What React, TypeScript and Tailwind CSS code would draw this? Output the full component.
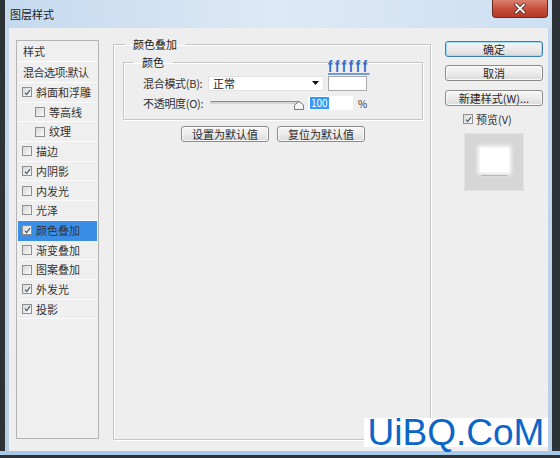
import React from "react";

const FONT = "font-['Noto_Sans_CJK_SC','Liberation_Sans',sans-serif]";

type CheckProps = { checked: boolean };

const Check: React.FC<CheckProps> = ({ checked }) => (
  <span className="flex h-[10px] w-[10px] shrink-0 items-center justify-center border border-[#8e8f8f] bg-linear-to-br from-[#d8d8d8] to-[#fafafa]">
    {checked && (
      <svg width="7" height="7" viewBox="0 0 7 7">
        <path d="M1 3.6 L2.7 5.6 L6 1.2" stroke="#4b5866" strokeWidth="1.2" fill="none" />
      </svg>
    )}
  </span>
);

const styles = [
  { label: "斜面和浮雕", checked: true },
  { label: "等高线", checked: false, sub: true },
  { label: "纹理", checked: false, sub: true },
  { label: "描边", checked: false },
  { label: "内阴影", checked: true },
  { label: "内发光", checked: false },
  { label: "光泽", checked: false },
  { label: "颜色叠加", checked: true, active: true },
  { label: "渐变叠加", checked: false },
  { label: "图案叠加", checked: false },
  { label: "外发光", checked: true },
  { label: "投影", checked: true },
];

type BtnProps = { children: React.ReactNode; focus?: boolean; className?: string };

const Btn: React.FC<BtnProps> = ({ children, focus, className }) => (
  <div
    className={
      "flex h-[16px] items-center justify-center rounded-[3px] border bg-linear-to-b from-[#f6f6f6] via-[#ebebeb] to-[#d9d9d9] text-[11px] leading-none text-[#2a2a2a] " +
      (focus
        ? "border-[#3c7fb1] shadow-[inset_0_0_0_1px_#9fdcfb] "
        : "border-[#8a8a8a] shadow-[inset_0_0_0_1px_#fbfbfb] ") +
      (className ?? "")
    }
  >
    {children}
  </div>
);

const App: React.FC = () => {
  return (
    <div className={`relative flex h-[458px] w-[560px] flex-col overflow-hidden bg-[#2e3338] pb-[3px] pl-[5px] pr-[8px] ${FONT}`}>
      <div className="flex flex-1 flex-col bg-linear-to-b from-[#c6d9ee] to-[#b9cfe6]">
        {/* title bar */}
        <div className="relative flex h-[28px] items-center bg-linear-to-r from-[#c5d9ee] via-[#dde9f6] to-[#cddff2] pl-[5px]">
          <span className="text-[11px] text-[#1b1b1b]">图层样式</span>
          <div className="absolute right-[4px] top-0 flex h-[18px] w-[56px] items-center justify-center rounded-b-[4px] border border-t-0 border-[#6e2a20] bg-linear-to-b from-[#d9806f] via-[#c6503d] to-[#b23a27]">
            <svg width="12" height="11" viewBox="0 0 12 11">
              <path d="M2 1.5 L10 9.5 M10 1.5 L2 9.5" stroke="#4a2a25" strokeWidth="3.4" strokeLinecap="square" />
              <path d="M2 1.5 L10 9.5 M10 1.5 L2 9.5" stroke="#ffffff" strokeWidth="1.8" strokeLinecap="square" />
            </svg>
          </div>
        </div>

        {/* client */}
        <div className="mx-[4px] mb-[4px] flex flex-1 items-start bg-[#eeeeee] pl-[7px]">
          {/* style list */}
          <div className="mt-[12px] flex h-[399px] w-[83px] flex-col border border-[#b4b4b4] bg-[#efefef] p-[1px] text-[11px] text-[#333]">
            <div className="flex h-[20px] items-center border-b border-white pl-[5px]">样式</div>
            <div className="flex h-[21px] items-center border-b border-white pl-[5px] tracking-[-0.5px]">混合选项:默认</div>
            {styles.map((s) => (
              <div
                key={s.label}
                className={
                  "flex h-[19.7px] items-center gap-[4px] border-b " +
                  (s.active ? "border-[#3a8ee6] bg-[#3a8ee6] " : "border-[#fbfbfb] ") +
                  (s.sub ? "pl-[17px]" : "pl-[4px]")
                }
              >
                <Check checked={s.checked} />
                <span>{s.label}</span>
              </div>
            ))}
          </div>

          {/* colour overlay group */}
          <fieldset className="ml-[14px] mt-[8px] h-[404px] w-[318px] border border-[#c6c6c6] pl-[9px] pr-[7px] shadow-[inset_1px_1px_0_#ffffff,1px_1px_0_#ffffff]">
            <legend className="ml-[2px] px-[8px] text-[11px] leading-[16px] text-[#222]">颜色叠加</legend>
            <fieldset className="mt-[2px] h-[66px] w-[300px] border border-[#c6c6c6] pl-[19px] shadow-[inset_1px_1px_0_#ffffff,1px_1px_0_#ffffff]">
              <legend className="ml-[-10px] px-[9px] text-[11px] leading-[16px] text-[#222]">颜色</legend>
              <div className="mt-[5px] flex h-[16px] items-center text-[11px] text-[#333]">
                <span className="w-[65px] tracking-[-0.3px]">混合模式(B):</span>
                <div className="flex h-[15px] w-[116px] items-center justify-between border border-[#e2e2e2] bg-white pl-[4px] pr-[4px]">
                  <span className="text-[#222]">正常</span>
                  <svg width="7" height="4" viewBox="0 0 7 4">
                    <path d="M0 0 H7 L3.5 4 Z" fill="#111" />
                  </svg>
                </div>
                <div className="ml-[4px] h-[15px] w-[39px] border border-[#a9a9a9] bg-white" />
              </div>
              <div className="mt-[4px] flex h-[16px] items-center text-[11px] text-[#333]">
                <span className="w-[67px] tracking-[-0.3px]">不透明度(O):</span>
                <div className="relative h-[16px] w-[92px]">
                  <div className="absolute left-0 right-[2px] top-[6px] h-[3px] rounded-full border-t border-[#8c8c8c] bg-[#d4d4d4]" />
                  <svg className="absolute left-[84px] top-[6px]" width="10" height="9" viewBox="0 0 10 9">
                    <path d="M5 0.5 L9.5 4 V8.5 H0.5 V4 Z" fill="#f4f4f4" stroke="#7a7a7a" />
                  </svg>
                </div>
                <div className="ml-[6px] flex h-[14px] w-[45px] items-center bg-white pl-[2px]">
                  <span className="bg-[#3399ff] px-[1px] text-[10px] leading-[12px] text-white">100</span>
                </div>
                <span className="ml-[5px] text-[10px]">%</span>
              </div>
            </fieldset>
            <div className="mt-[6px] flex justify-center gap-[8px]">
              <Btn className="w-[88px]">设置为默认值</Btn>
              <Btn className="w-[88px]">复位为默认值</Btn>
            </div>
          </fieldset>

          {/* right column */}
          <div className="ml-[14px] mt-[13px] flex w-[98px] flex-col">
            <Btn focus>确定</Btn>
            <Btn className="mt-[8px]">取消</Btn>
            <Btn className="mt-[9px]">新建样式(W)...</Btn>
            <div className="ml-[18px] mt-[6px] flex h-[14px] items-center gap-[3px] text-[11px] text-[#333]">
              <Check checked />
              <span>预览(V)</span>
            </div>
            <div className="ml-[19px] mt-[7px] flex h-[58px] w-[60px] flex-col items-center border border-[#e2e2e2] bg-[#d6d6d6] pt-[14px]">
              <div className="h-[24px] w-[29px] bg-white shadow-[0_0_4px_2px_#ffffff]" />
              <div className="mt-[3px] h-[1px] w-[26px] bg-[#b8b8b8]" />
            </div>
          </div>
        </div>
      </div>
      <div className="absolute bottom-[3px] left-0 right-0 h-[4px] bg-[#a9c9ea]" />

      {/* hex value annotation */}
      <div className="absolute left-[328px] top-[59px] w-[42px] origin-top scale-y-[1.3] font-['Liberation_Sans',sans-serif] text-[13px] font-bold leading-[11px] tracking-[2.6px] text-[#2f6fd6] underline">
        ffffff
      </div>

      {/* watermark */}
      <div className="absolute left-[364px] top-[418px] flex h-[29px] w-[184px] items-center justify-center bg-white font-['Liberation_Sans',sans-serif] text-[37px] leading-none text-[#0c66c7]">
        UiBQ.CoM
      </div>
    </div>
  );
};

export default App;
